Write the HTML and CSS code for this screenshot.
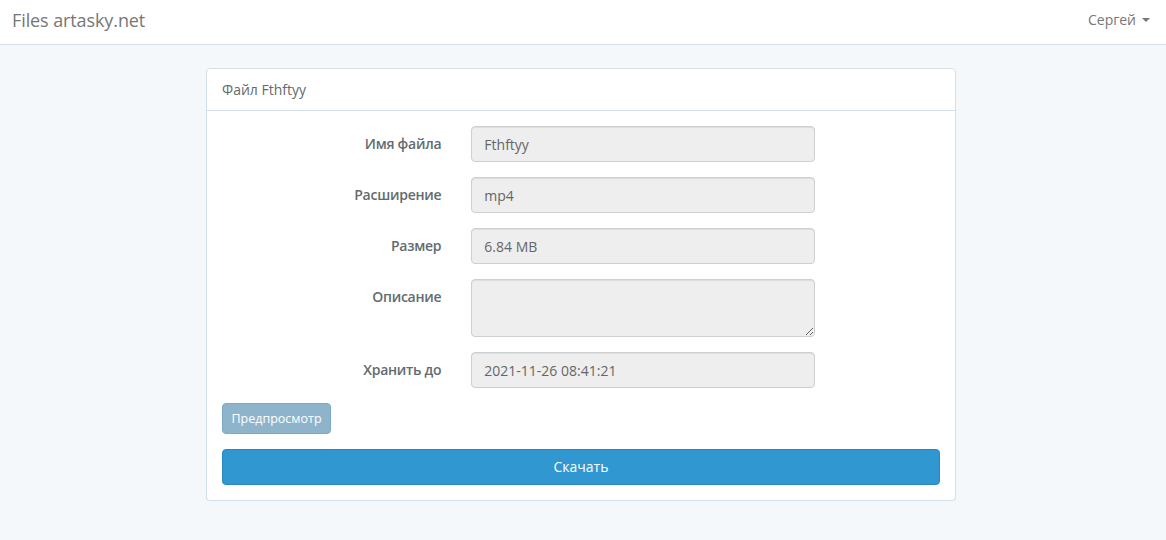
FILE: index.html
```html
<!DOCTYPE html>
<html lang="ru">
<head>
<meta charset="utf-8">
<title>Files artasky.net</title>
<link rel="stylesheet" href="styles.css">
</head>
<body>
<nav class="navbar">
  <a class="brand" href="#">Files artasky.net</a>
  <a class="user" href="#">Сергей <span class="caret"></span></a>
</nav>
<main class="container">
  <section class="panel">
    <div class="panel-heading">Файл Fthftyy</div>
    <div class="panel-body">
      <form class="form">
        <div class="form-group">
          <label class="label">Имя файла</label>
          <div class="field"><input class="control" type="text" value="Fthftyy" disabled></div>
        </div>
        <div class="form-group">
          <label class="label">Расширение</label>
          <div class="field"><input class="control" type="text" value="mp4" disabled></div>
        </div>
        <div class="form-group">
          <label class="label">Размер</label>
          <div class="field"><input class="control" type="text" value="6.84 MB" disabled></div>
        </div>
        <div class="form-group">
          <label class="label">Описание</label>
          <div class="field"><textarea class="control area" rows="2" disabled></textarea></div>
        </div>
        <div class="form-group">
          <label class="label">Хранить до</label>
          <div class="field"><input class="control" type="text" value="2021-11-26 08:41:21" disabled></div>
        </div>
        <div class="actions">
          <button class="btn btn-info" type="button">Предпросмотр</button>
        </div>
        <button class="btn btn-primary" type="button">Скачать</button>
      </form>
    </div>
  </section>
</main>
</body>
</html>
```
FILE: styles.css
```css
* { box-sizing: border-box; }
html, body { margin: 0; padding: 0; }
body {
  background: #f5f8fa;
  font-family: "Open Sans", Lato, sans-serif;
  font-size: 14px;
  line-height: 1.6;
  color: #636b6f;
}
.navbar {
  height: 45px;
  background: #fff;
  border-bottom: 1px solid #d3e0e9;
  display: flex;
  align-items: center;
  justify-content: space-between;
  padding: 0 16px 0 12px;
}
.brand {
  font-size: 18px;
  color: #777;
  text-decoration: none;
  line-height: 20px;
  margin-top: -4px;
  letter-spacing: -0.1px;
}
.user {
  font-size: 14px;
  color: #777;
  text-decoration: none;
  display: flex;
  align-items: center;
  gap: 4px;
  margin-top: -4px;
}
.caret {
  width: 0; height: 0;
  border-top: 4px solid #777;
  border-left: 4px solid transparent;
  border-right: 4px solid transparent;
  margin-left: 2px;
}
.container {
  width: 750px;
  margin: 23px 0 0 206px;
}
.panel {
  background: #fff;
  border: 1px solid #d3e0e9;
  border-radius: 4px;
  box-shadow: 0 1px 1px rgba(0,0,0,0.05);
}
.panel-heading {
  padding: 10px 15px;
  border-bottom: 1px solid #d3e0e9;
  line-height: 21px;
}
.panel-body { padding: 15px; }
.form-group {
  display: flex;
  margin: 0 -15px 15px;
}
.label {
  width: 249.33px;
  padding: 7px 15px 0;
  text-align: right;
  font-weight: 600;
  line-height: 22.4px;
  letter-spacing: -0.25px;
}
.field {
  width: 374px;
  padding: 0 15px;
}
.control {
  display: block;
  width: 100%;
  height: 36px;
  padding: 6px 12px;
  font: inherit;
  font-size: 14px;
  line-height: 22.4px;
  color: #666;
  background: #eee;
  border: 1px solid #ccd0d2;
  border-radius: 4px;
  box-shadow: inset 0 1px 1px rgba(0,0,0,0.075);
  opacity: 1;
  -webkit-text-fill-color: #666;
}
.area { height: 58px; resize: vertical; }
.actions { margin-bottom: 15px; }
.btn {
  font-family: inherit;
  border-radius: 4px;
  color: #fff;
  cursor: pointer;
}
.btn-info {
  background: #8eb4cb;
  border: 1px solid #7da8c3;
  font-size: 12.5px;
  line-height: 19px;
  padding: 5px 8px;
  height: 31px;
  width: 109px;
  white-space: nowrap;
}
.btn-primary {
  display: block;
  width: 100%;
  height: 36px;
  background: #3097d1;
  border: 1px solid #2a88bd;
  font-size: 14px;
  line-height: 22.4px;
  padding: 6px 12px;
}
```
